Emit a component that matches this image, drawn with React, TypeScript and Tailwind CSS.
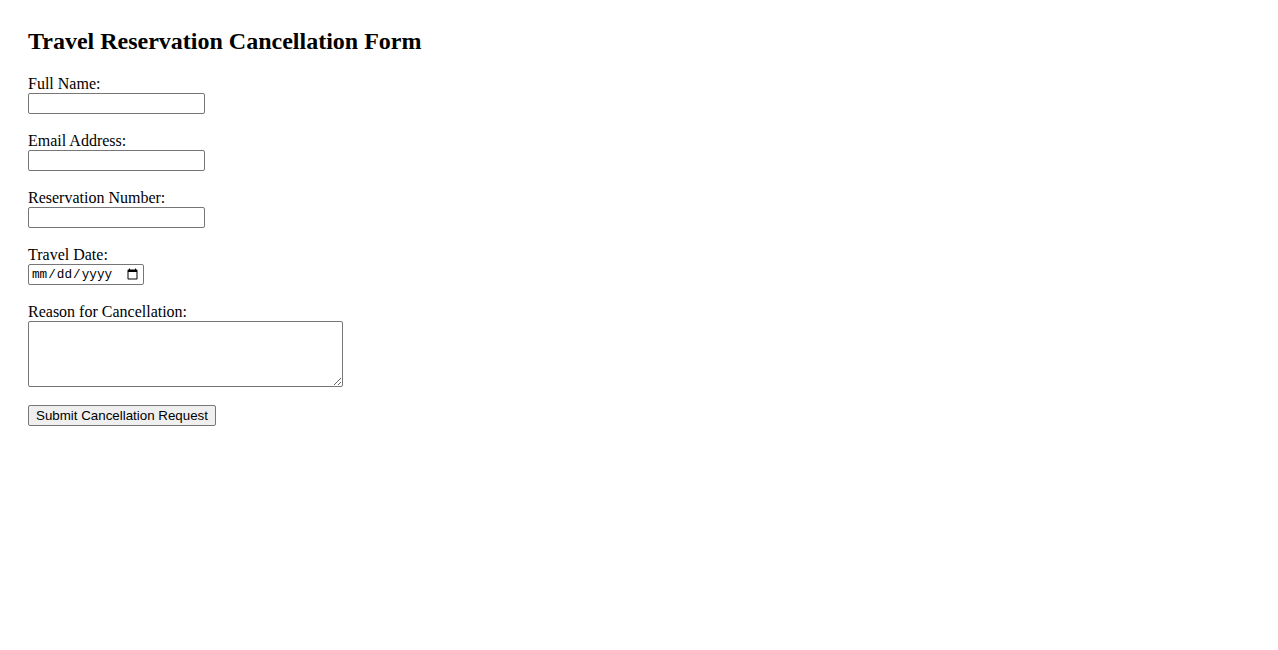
import React from "react";

export default function App() {
  const inputCls =
    "block w-[177px] h-[21px] border border-[#767676] rounded-[2px] px-[2px] py-[1px] bg-white text-[13.33px] [font-family:Arial,'Liberation_Sans',sans-serif] outline-none";
  return (
    <div className="min-h-[650px] bg-white text-black px-[28px] pt-[28px] [font-family:'Liberation_Serif','Times_New_Roman',serif]">
      <h2 className="text-[24px] font-bold leading-[27.6px] mb-[19px]">
        Travel Reservation Cancellation Form
      </h2>
      <form className="flex flex-col" onSubmit={(e) => e.preventDefault()}>
        <label className="block text-[16px] leading-[18.4px]">Full Name:</label>
        <input type="text" className={inputCls} />
        <div className="h-[17.6px]" />
        <label className="block text-[16px] leading-[18.4px]">Email Address:</label>
        <input type="email" className={inputCls} />
        <div className="h-[17.6px]" />
        <label className="block text-[16px] leading-[18.4px]">Reservation Number:</label>
        <input type="text" className={inputCls} />
        <div className="h-[17.6px]" />
        <label className="block text-[16px] leading-[18.4px]">Travel Date:</label>
        <input
          type="date"
          className="block w-[116px] h-[21px] border border-[#767676] rounded-[2px] px-[2px] py-[1px] bg-white text-[12.7px] [font-family:'Liberation_Mono',monospace] outline-none"
        />
        <div className="h-[17.6px]" />
        <label className="block text-[16px] leading-[18.4px]">Reason for Cancellation:</label>
        <textarea className="block w-[315px] h-[66px] border border-[#767676] rounded-[2px] px-[2px] py-[2px] bg-white text-[13.33px] [font-family:'Liberation_Mono',monospace] outline-none" />
        <div className="h-[18px]" />
        <div className="flex">
          <button
            type="submit"
            className="h-[21px] w-[188px] border border-[#767676] rounded-[2px] bg-[#efefef] px-[6px] py-[1px] text-[13.33px] leading-[16px] [font-family:Arial,'Liberation_Sans',sans-serif]"
          >
            Submit Cancellation Request
          </button>
        </div>
      </form>
    </div>
  );
}
